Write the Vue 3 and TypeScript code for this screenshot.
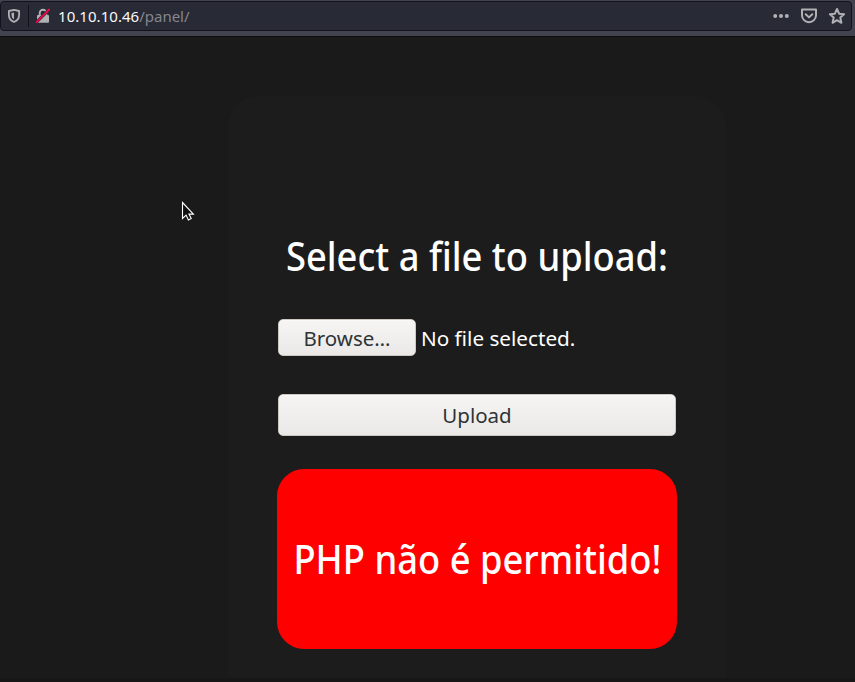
<script setup lang="ts">
const host: string = '10.10.10.46'
const path: string = '/panel/'
</script>

<template>
  <div class="window">
    <header class="toolbar">
      <div class="urlbar">
        <svg class="shield" width="14" height="16" viewBox="0 0 14 16">
          <path d="M7 1.900 12.100 3V7c0 3.300-1.800 5.700-5.100 7-3.300-1.300-5.100-3.700-5.100-7V3Z" fill="none" stroke="#b1b1b3" stroke-width="1.800" stroke-linejoin="round" />
          <path d="M7 4.600v6.800C5.300 10.300 4.500 8.800 4.500 7V5.100Z" fill="#b1b1b3" />
        </svg>
        <span class="divider"></span>
        <svg class="lock" width="16" height="16" viewBox="0 0 16 16">
          <path d="M4.700 8V5a3.300 3.300 0 0 1 6.600 0v3" fill="none" stroke="#b1b1b3" stroke-width="1.900" />
          <rect x="2" y="7" width="12" height="7.800" rx="1" fill="#b1b1b3" />
          <path d="M1.200 14.500 14.300 1.400" stroke="#282a36" stroke-width="3" />
          <path d="M1.500 14.200 14.200 1.500" stroke="#f0064b" stroke-width="1.800" stroke-linecap="round" />
        </svg>
        <span class="url"><span class="host">{{ host }}</span>{{ path }}</span>
        <div class="actions">
          <svg width="18" height="18" viewBox="0 0 18 18" fill="#b1b1b3">
            <circle cx="3.200" cy="9" r="2" /><circle cx="9" cy="9" r="2" /><circle cx="14.800" cy="9" r="2" />
          </svg>
          <svg width="18" height="18" viewBox="0 0 18 18" fill="none" stroke="#b1b1b3" stroke-width="2" stroke-linecap="round" stroke-linejoin="round">
            <path d="M2 2.600h14v5.600a7 7 0 0 1-14 0Z" />
            <path d="m5.700 7.200 3.300 3.200 3.300-3.200" />
          </svg>
          <svg width="18" height="18" viewBox="0 0 18 18" fill="none" stroke="#b1b1b3" stroke-width="2" stroke-linejoin="round">
            <path d="m9 2 2.100 4.700 5 .5-3.800 3.400 1.100 5.200L9 13.200l-4.400 2.600 1.100-5.200L1.900 7.200l5-.5Z" />
          </svg>
        </div>
      </div>
    </header>

    <main class="page">
      <section class="card">
        <h1 class="title"><span class="title-text">Select a file to upload:</span></h1>
        <div class="file-row">
          <button class="btn browse" type="button">Browse…</button>
          <span class="filename">No file selected.</span>
        </div>
        <button class="btn submit" type="button">Upload</button>
        <div class="alert"><span class="alert-text">PHP não é permitido!</span></div>
      </section>
      <svg class="cursor" width="14" height="21" viewBox="0 0 14 21">
        <path d="M1.500 1.500v16l3.600-3.400 2.300 4.800 2.800-1.300-2.300-4.500h4.500Z" fill="#111" stroke="#fff" stroke-width="1.100" />
      </svg>
    </main>
  </div>
</template>

<style>
body {
  background: #1a1a1a;
}
</style>

<style scoped>
.window {
  width: 855px;
  height: 682px;
  overflow: hidden;
  box-sizing: border-box;
  display: flex;
  flex-direction: column;
  border-bottom: 4px solid #181617;
  background: #1a1a1a;
  font-family: "Noto Sans", sans-serif;
}
.toolbar {
  flex: none;
  box-sizing: border-box;
  height: 37px;
  padding: 1px 3px 5px 0;
  background: #42434f;
  border-bottom: 1px solid #0c0c0d;
}
.urlbar {
  height: 30px;
  box-sizing: border-box;
  display: flex;
  align-items: center;
  padding: 0 5px 0 6px;
  border: 1px solid #11121a;
  border-radius: 4px;
  background: #282a36;
}
.shield,
.lock,
.divider,
.actions {
  flex: none;
}
.divider {
  width: 1px;
  height: 22px;
  margin: 0 6px 0 7px;
  background: #11121a;
}
.url {
  margin-left: 7px;
  font-size: 15px;
  line-height: 20px;
  letter-spacing: -0.03px;
  color: #85868d;
  white-space: nowrap;
}
.host {
  letter-spacing: 0.05px;
  color: #f9f9fa;
}
.actions {
  display: flex;
  gap: 10px;
  margin-left: auto;
}
.page {
  position: relative;
  flex: 1;
  min-height: 0;
  padding-top: 59px;
}
.card {
  box-sizing: border-box;
  display: flex;
  flex-direction: column;
  width: 498px;
  height: 640px;
  margin-left: 228px;
  padding: 130px 49px 0;
  border-radius: 30px;
  background: #1c1c1c;
}
.title {
  display: flex;
  justify-content: center;
  margin: 0 0 33px;
  height: 60px;
  font-size: 39px;
  font-weight: 500;
  line-height: 60px;
  color: #fff;
  white-space: nowrap;
}
.title-text,
.alert-text {
  flex: none;
  transform: scaleX(0.932);
}
.file-row {
  display: flex;
  align-items: center;
  height: 37px;
  margin: 0 1px 38px;
}
.btn {
  box-sizing: border-box;
  padding: 0;
  border: 1px solid #cdc7c2;
  border-radius: 5px;
  background: linear-gradient(#f6f5f4, #ebe9e8);
  box-shadow: inset 0 1px #faf9f8;
  font-family: inherit;
  font-size: 20.5px;
  color: #2e3436;
  white-space: nowrap;
}
.browse {
  flex: none;
  width: 138px;
  height: 37px;
}
.filename {
  margin-left: 5px;
  padding-top: 2px;
  font-size: 20.7px;
  line-height: 35px;
  color: #fff;
  white-space: nowrap;
}
.submit {
  flex: none;
  height: 42px;
  margin: 0 1px;
}
.alert {
  flex: none;
  display: flex;
  align-items: center;
  justify-content: center;
  height: 180px;
  margin-top: 33px;
  border-radius: 27px;
  background: #f00;
  font-size: 39px;
  font-weight: 500;
  line-height: 60px;
  color: #fff;
  white-space: nowrap;
}
.cursor {
  position: absolute;
  left: 181px;
  top: 164px;
}
</style>
